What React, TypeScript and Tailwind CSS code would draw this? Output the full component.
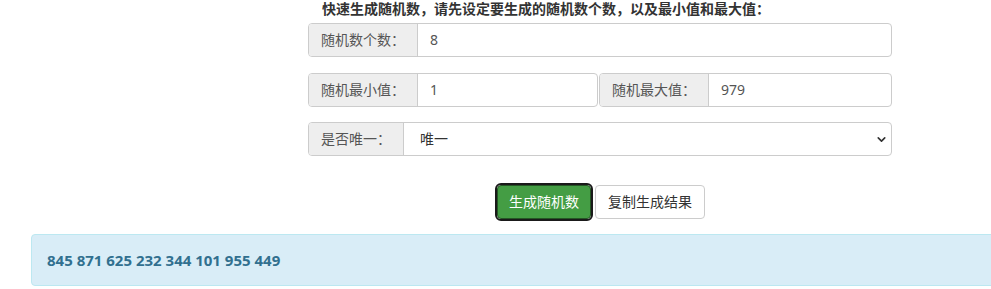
import { ChevronDown } from "lucide-react";

const font = "font-['Segoe_UI','Noto_Sans','Noto_Sans_CJK_SC',sans-serif]";

function Addon({ label, w }: { label: string; w: string }) {
  return (
    <div
      className={`${w} shrink-0 flex items-center px-3 bg-[#eeeeee] text-[#555555] text-sm border-r border-[#cccccc]`}
    >
      {label}
    </div>
  );
}

function InputGroup({
  label,
  value,
  addonWidth,
  className = "",
}: {
  label: string;
  value: string;
  addonWidth: string;
  className?: string;
}) {
  return (
    <div
      className={`flex h-[34px] border border-[#cccccc] rounded-[4px] overflow-hidden bg-white ${className}`}
    >
      <Addon label={label} w={addonWidth} />
      <div className="flex-1 flex items-center px-3 text-sm text-[#555555]">
        {value}
      </div>
    </div>
  );
}

export default function App() {
  return (
    <div className={`w-[991px] h-[289px] overflow-hidden bg-white ${font}`}>
      <div className="ml-[308px] w-[584px] flex flex-col">
        <div className="h-[23px] pt-[1px] pl-[14px] text-sm font-bold text-[#333333] leading-[16px]">
          快速生成随机数，请先设定要生成的随机数个数，以及最小值和最大值：
        </div>

        <InputGroup label="随机数个数：" value="8" addonWidth="w-[109px]" />

        <div className="mt-4 flex gap-[1px]">
          <InputGroup
            label="随机最小值："
            value="1"
            addonWidth="w-[109px]"
            className="w-[290px]"
          />
          <InputGroup
            label="随机最大值："
            value="979"
            addonWidth="w-[109px]"
            className="flex-1"
          />
        </div>

        <div className="mt-[15px] flex h-[34px] border border-[#cccccc] rounded-[4px] overflow-hidden bg-white">
          <Addon label="是否唯一：" w="w-[95px]" />
          <div className="flex-1 flex items-center justify-between pl-[16px] pr-[3px] text-sm text-[#333333]">
            <span>唯一</span>
            <ChevronDown className="w-[13px] h-[13px] text-[#333333]" strokeWidth={3} />
          </div>
        </div>

        <div className="mt-[29px] flex justify-center gap-[4px] pl-[2px]">
          <button className="h-[34px] px-[11px] text-sm text-white bg-[#449d44] border border-[#255625] rounded-[4px] outline outline-2 outline-[#1a1a1a] outline-offset-0">
            生成随机数
          </button>
          <button className="h-[34px] px-3 text-sm text-[#333333] bg-white border border-[#cccccc] rounded-[4px]">
            复制生成结果
          </button>
        </div>
      </div>

      <div className="mt-[15px] ml-[31px] w-[980px] h-[52px] flex items-center px-[15px] bg-[#d9edf7] border border-[#bce8f1] rounded-[4px] text-[#31708f] text-[15px] font-bold">
        845 871 625 232 344 101 955 449
      </div>
    </div>
  );
}
